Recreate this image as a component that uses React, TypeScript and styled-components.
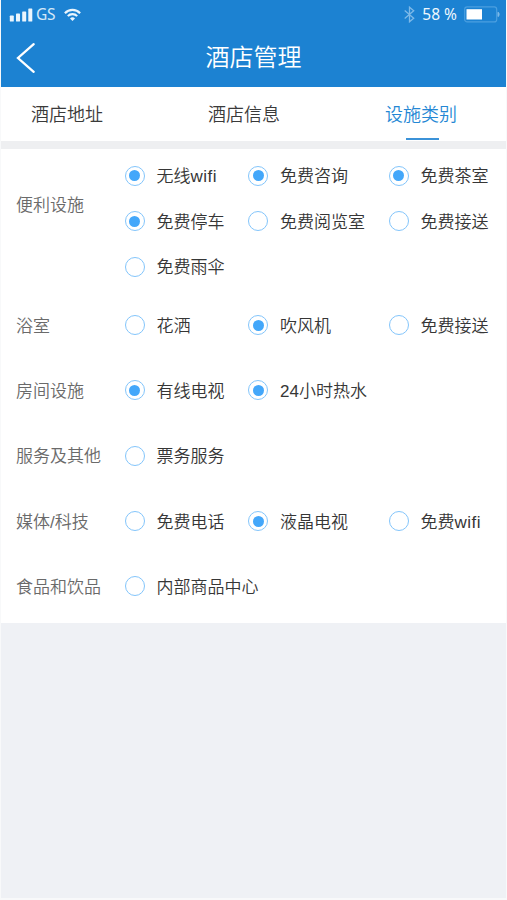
import React from "react";
import styled, { createGlobalStyle } from "styled-components";

const GlobalStyle = createGlobalStyle`
  * { box-sizing: border-box; }
  body { margin: 0; background: #fff; }
`;

const Screen = styled.div`
  width: 507px;
  height: 900px;
  padding: 0 1px 2px 1px;
  overflow: hidden;
  display: flex;
  flex-direction: column;
  background: #f8f9fa;
  font-family: "Liberation Sans", "Noto Sans CJK SC", sans-serif;
`;

const Header = styled.header`
  height: 87px;
  flex: none;
  background: #1c82d2;
  color: #fff;
`;

const StatusBar = styled.div`
  height: 29px;
  padding: 0 6px 0 8px;
  display: flex;
  align-items: center;
  justify-content: space-between;
  font-family: "Noto Sans", sans-serif;
`;

const StatusGroup = styled.div`
  display: flex;
  align-items: center;
`;

const Carrier = styled.span`
  margin: -2px 9px 0 3px;
  font-size: 15.5px;
  line-height: 20px;
  letter-spacing: -0.4px;
  color: #d3e8f8;
`;

const Percent = styled.span`
  margin: -2px 7px 0 7px;
  font-size: 15.5px;
  line-height: 20px;
  color: #eef7fd;
  white-space: nowrap;
`;

const NavBar = styled.div`
  height: 57px;
  display: grid;
  grid-template-columns: 60px 1fr 60px;
  align-items: center;
`;

const BackButton = styled.button`
  width: 40px;
  height: 40px;
  margin-left: 5px;
  padding: 0;
  border: 0;
  background: none;
  color: #fff;
  display: flex;
  align-items: center;
  justify-content: center;
`;

const Title = styled.h1`
  margin: 0;
  text-align: center;
  font-size: 24px;
  line-height: 36px;
  font-weight: 350;
`;

const Tabs = styled.nav`
  height: 62px;
  flex: none;
  padding: 0 0 0 22px;
  display: grid;
  grid-template-columns: 88px 1fr 88px 1fr 88px 41px;
  background: #fff;
  border-bottom: 8px solid #eeeff1;
`;

const Tab = styled.a<{ $column: number; $active?: boolean }>`
  grid-column: ${(p) => p.$column};
  height: 54px;
  display: flex;
  flex-direction: column;
  align-items: center;
  font-size: 18px;
  line-height: 26px;
  padding-top: 15px;
  font-weight: 350;
  color: ${(p) => (p.$active ? "#2487d4" : "#3a3a3a")};
  white-space: nowrap;

  &::after {
    content: "";
    width: 33px;
    height: 2px;
    margin: 10px 0 0 2px;
    background: ${(p) => (p.$active ? "#3b92d8" : "transparent")};
  }
`;

const Facilities = styled.main`
  height: 474px;
  flex: none;
  padding-top: 4px;
  background: #fff;
`;

const Section = styled.section<{ $tall?: boolean }>`
  display: grid;
  grid-template-columns: 108.5px 1fr;
  padding-left: 15px;
  height: ${(p) => (p.$tall ? "139.5px" : "65.3px")};
  align-items: ${(p) => (p.$tall ? "start" : "center")};
`;

const SectionLabel = styled.h2<{ $tall?: boolean }>`
  margin: ${(p) => (p.$tall ? "40px 0 0" : "2px 0 0")};
  font-size: 17px;
  line-height: 25px;
  font-weight: 350;
  color: #6a6a6a;
  white-space: nowrap;
`;

const Options = styled.div`
  display: grid;
  grid-template-columns: 123.5px 140.5px 1fr;
  grid-auto-rows: 45.5px;
  align-items: center;
`;

const Option = styled.label`
  display: flex;
  align-items: center;
  gap: 12px;
  font-size: 17px;
  line-height: 25px;
  font-weight: 350;
  color: #363636;
  white-space: nowrap;
`;

const OptionName = styled.span`
  padding-top: 2px;
`;

const Latin = styled.span`
  letter-spacing: 0.5px;
`;

const Radio = styled.span<{ $on: boolean }>`
  width: 20px;
  height: 20px;
  flex: none;
  border: 1.5px solid #83c5fb;
  border-radius: 50%;
  display: flex;
  align-items: center;
  justify-content: center;

  &::after {
    content: "";
    width: 11px;
    height: 11px;
    flex: none;
    border-radius: 50%;
    background: ${(p) => (p.$on ? "#43a7fa" : "transparent")};
  }
`;

const Background = styled.div`
  flex: 1;
  background: #eff1f5;
`;

const SignalIcon = () => (
  <svg width="24" height="16" viewBox="0 0 24 16" fill="#eaf5fd">
    <rect x="0.8" y="8.6" width="4" height="6" rx=".7" />
    <rect x="7" y="6.6" width="4" height="8" rx=".7" />
    <rect x="13.2" y="4.4" width="4" height="10.2" rx=".7" />
    <rect x="19.3" y="1.4" width="4" height="13.2" rx=".7" />
  </svg>
);

const WifiIcon = () => (
  <svg width="17" height="14" viewBox="0 0 17 14" fill="none" stroke="#eaf5fd" strokeWidth="2.1">
    <path d="M.9 5.2C5 .7 12 .7 16.1 5.2" />
    <path d="M3.8 8.1c2.5-2.7 6.9-2.7 9.4 0" />
    <path d="M6 10.4c1.4-1.5 3.6-1.5 5 0L8.5 13z" fill="#eaf5fd" stroke="none" />
  </svg>
);

const BluetoothIcon = () => (
  <svg width="11" height="17" viewBox="0 0 11 17" fill="none" stroke="#7db9e8" strokeWidth="1.3">
    <path d="M.7 4.5l9 7.8-4.2 3.5V1.2l4.2 3.5-9 7.8" />
  </svg>
);

const BatteryIcon = () => (
  <svg width="36" height="17" viewBox="0 0 36 17">
    <rect x=".7" y=".9" width="32" height="15" rx="2.5" fill="none" stroke="#4b9fe0" strokeWidth="1.2" />
    <rect x="2.5" y="3.2" width="15.5" height="10.3" fill="#fff" />
    <path d="M34 6.2c1.5.4 1.5 4 0 4.4z" fill="#7db9e8" stroke="#7db9e8" />
  </svg>
);

const BackIcon = () => (
  <svg width="20" height="32" viewBox="0 0 20 32" fill="none" stroke="currentColor" strokeWidth="2.3" strokeLinecap="round">
    <path d="M17.7 2.2L2 16l15.7 13.8" />
  </svg>
);

type Facility = { name: string; latin?: string; on?: boolean };

const sections: { label: string; tall?: boolean; items: Facility[] }[] = [
  {
    label: "便利设施",
    tall: true,
    items: [
      { name: "无线", latin: "wifi", on: true },
      { name: "免费咨询", on: true },
      { name: "免费茶室", on: true },
      { name: "免费停车", on: true },
      { name: "免费阅览室" },
      { name: "免费接送" },
      { name: "免费雨伞" },
    ],
  },
  { label: "浴室", items: [{ name: "花洒" }, { name: "吹风机", on: true }, { name: "免费接送" }] },
  { label: "房间设施", items: [{ name: "有线电视", on: true }, { name: "24小时热水", on: true }] },
  { label: "服务及其他", items: [{ name: "票务服务" }] },
  {
    label: "媒体/科技",
    items: [{ name: "免费电话" }, { name: "液晶电视", on: true }, { name: "免费", latin: "wifi" }],
  },
  { label: "食品和饮品", items: [{ name: "内部商品中心" }] },
];

export default function App() {
  return (
    <Screen>
      <GlobalStyle />
      <Header>
        <StatusBar>
          <StatusGroup>
            <SignalIcon />
            <Carrier>GS</Carrier>
            <WifiIcon />
          </StatusGroup>
          <StatusGroup>
            <BluetoothIcon />
            <Percent>58 %</Percent>
            <BatteryIcon />
          </StatusGroup>
        </StatusBar>
        <NavBar>
          <BackButton aria-label="返回">
            <BackIcon />
          </BackButton>
          <Title>酒店管理</Title>
        </NavBar>
      </Header>
      <Tabs>
        <Tab $column={1}>酒店地址</Tab>
        <Tab $column={3}>酒店信息</Tab>
        <Tab $column={5} $active>
          设施类别
        </Tab>
      </Tabs>
      <Facilities>
        {sections.map((section) => (
          <Section key={section.label} $tall={section.tall}>
            <SectionLabel $tall={section.tall}>{section.label}</SectionLabel>
            <Options>
              {section.items.map(({ name, latin, on = false }) => (
                <Option key={name}>
                  <Radio $on={on} role="radio" aria-checked={on} />
                  <OptionName>
                    {name}
                    {latin && <Latin>{latin}</Latin>}
                  </OptionName>
                </Option>
              ))}
            </Options>
          </Section>
        ))}
      </Facilities>
      <Background />
    </Screen>
  );
}
